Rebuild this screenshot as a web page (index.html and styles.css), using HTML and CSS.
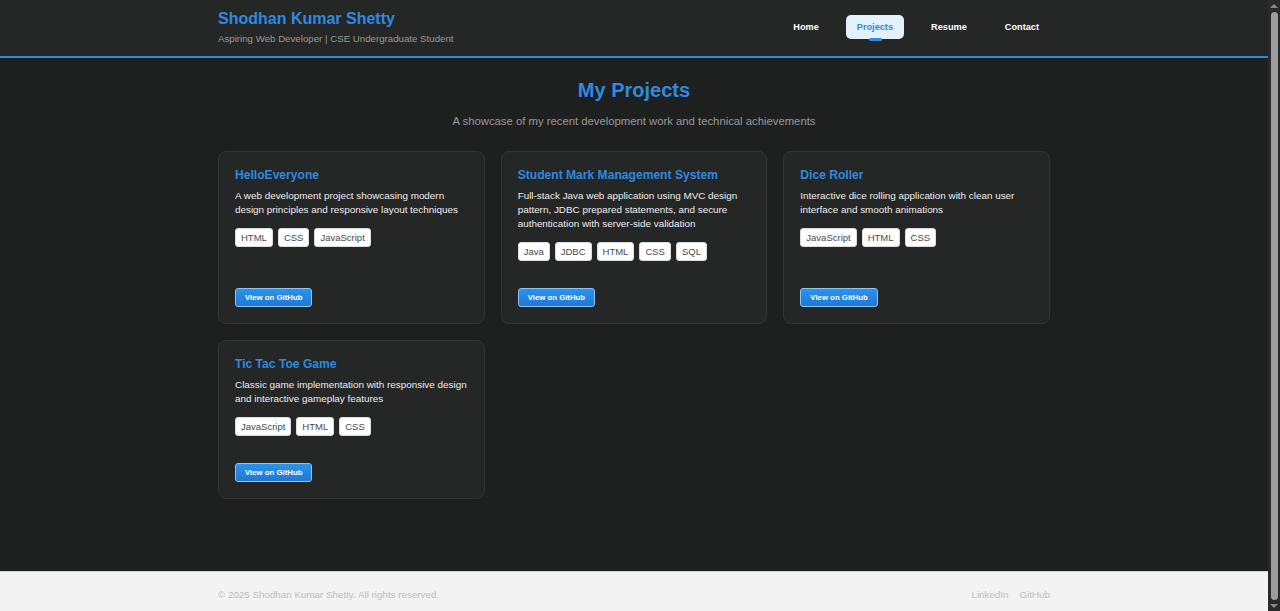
FILE: index.html
```html
<!DOCTYPE html>
<html lang="en">
<head>
<meta charset="utf-8">
<title>Shodhan Kumar Shetty - Projects</title>
<link rel="stylesheet" href="styles.css">
</head>
<body>
<header class="site-header">
  <div class="header-inner">
    <div class="brand">
      <h1 class="brand-name">Shodhan Kumar Shetty</h1>
      <p class="brand-tag">Aspiring Web Developer | CSE Undergraduate Student</p>
    </div>
    <nav class="nav">
      <a class="nav-link" href="#">Home</a>
      <a class="nav-link active" href="#">Projects</a>
      <a class="nav-link" href="#">Resume</a>
      <a class="nav-link" href="#">Contact</a>
    </nav>
  </div>
</header>
<main class="main">
  <h2 class="page-title">My Projects</h2>
  <p class="page-sub">A showcase of my recent development work and technical achievements</p>
  <div class="grid">
    <article class="card">
      <h3 class="card-title">HelloEveryone</h3>
      <p class="card-desc">A web development project showcasing modern design principles and responsive layout techniques</p>
      <div class="tags"><span class="tag">HTML</span><span class="tag">CSS</span><span class="tag">JavaScript</span></div>
      <a class="btn" href="#">View on GitHub</a>
    </article>
    <article class="card">
      <h3 class="card-title">Student Mark Management System</h3>
      <p class="card-desc">Full-stack Java web application using MVC design pattern, JDBC prepared statements, and secure authentication with server-side validation</p>
      <div class="tags"><span class="tag">Java</span><span class="tag">JDBC</span><span class="tag">HTML</span><span class="tag">CSS</span><span class="tag">SQL</span></div>
      <a class="btn" href="#">View on GitHub</a>
    </article>
    <article class="card">
      <h3 class="card-title">Dice Roller</h3>
      <p class="card-desc">Interactive dice rolling application with clean user interface and smooth animations</p>
      <div class="tags"><span class="tag">JavaScript</span><span class="tag">HTML</span><span class="tag">CSS</span></div>
      <a class="btn" href="#">View on GitHub</a>
    </article>
    <article class="card">
      <h3 class="card-title">Tic Tac Toe Game</h3>
      <p class="card-desc">Classic game implementation with responsive design and interactive gameplay features</p>
      <div class="tags"><span class="tag">JavaScript</span><span class="tag">HTML</span><span class="tag">CSS</span></div>
      <a class="btn" href="#">View on GitHub</a>
    </article>
  </div>
</main>
<footer class="site-footer">
  <div class="footer-inner">
    <p class="copy">© 2025 Shodhan Kumar Shetty. All rights reserved.</p>
    <div class="footer-links"><a href="#">LinkedIn</a><a href="#">GitHub</a></div>
  </div>
</footer>
<div class="scrollbar" aria-hidden="true">
  <span class="sb-arrow sb-up"></span>
  <span class="sb-thumb"></span>
  <span class="sb-arrow sb-down"></span>
</div>
</body>
</html>
```

FILE: styles.css
```css
* { box-sizing: border-box; }
html, body { margin: 0; padding: 0; }
html { background: #1e1f1f; }
body {
  background: #1e1f1f;
  font-family: "Liberation Sans", Arial, sans-serif;
  color: #e8e8e8;
  margin-right: 12px;
}
a { text-decoration: none; }

.scrollbar {
  position: fixed;
  top: 0;
  right: 0;
  width: 12px;
  height: 100vh;
  background: #2a2a2a;
  display: flex;
  flex-direction: column;
  align-items: center;
  padding: 4px 0 3px;
}
.sb-arrow {
  width: 0;
  height: 0;
  border-left: 4px solid transparent;
  border-right: 4px solid transparent;
}
.sb-up { border-bottom: 4px solid #8a8a8a; }
.sb-down { border-top: 4px solid #8a8a8a; }
.sb-thumb {
  flex: 1;
  width: 7px;
  margin: 4px 0;
  border-radius: 4px;
  background: #9d9d9d;
}

.site-header {
  background: #252626;
  border-bottom: 2px solid #2f8ae0;
}
.header-inner {
  width: 832px;
  margin: 0 auto;
  height: 56px;
  display: flex;
  align-items: center;
  justify-content: space-between;
}
.brand-name {
  margin: 0;
  font-size: 16px;
  font-weight: 700;
  color: #2f8ae0;
  line-height: 20px;
  margin-top: -3px;
}
.brand-tag {
  margin: 4px 0 0;
  font-size: 9.7px;
  color: #9a9a9a;
  line-height: 12px;
}
.nav {
  display: flex;
  gap: 16px;
  margin-top: -2px;
}
.nav-link {
  position: relative;
  display: block;
  padding: 0 11px;
  height: 24px;
  line-height: 24px;
  font-size: 9.2px;
  font-weight: 700;
  color: #ffffff;
  border-radius: 5px;
}
.nav-link.active {
  background: #e3f1fd;
  color: #2f8ae0;
}
.nav-link.active::after {
  content: "";
  position: absolute;
  left: 50%;
  bottom: -2px;
  width: 13px;
  height: 3px;
  margin-left: -6px;
  border-radius: 2px;
  background: #2f8ae0;
}

.main {
  width: 832px;
  margin: 0 auto;
  padding: 20px 0 72px;
}
.page-title {
  margin: 0;
  text-align: center;
  font-size: 20px;
  line-height: 24px;
  font-weight: 700;
  color: #2f8ae0;
}
.page-sub {
  margin: 12px 0 0;
  text-align: center;
  font-size: 11.3px;
  line-height: 14px;
  color: #9a9a9a;
}
.grid {
  margin-top: 23px;
  display: grid;
  grid-template-columns: repeat(3, 1fr);
  gap: 16px;
}
.card {
  background: #252626;
  border: 1px solid #333535;
  border-radius: 8px;
  padding: 16px;
  display: flex;
  flex-direction: column;
  align-items: flex-start;
}
.card-title {
  margin: -1px 0 0;
  font-size: 12.1px;
  line-height: 16px;
  font-weight: 700;
  color: #2f8ae0;
}
.card-desc {
  margin: 6px 0 0;
  font-size: 9.9px;
  line-height: 14px;
  color: #eeeeee;
}
.tags {
  display: flex;
  flex-wrap: wrap;
  gap: 5px;
  margin-top: 11px;
  margin-bottom: 27px;
}
.tag {
  display: block;
  background: #ffffff;
  color: #4a4a4a;
  border: 1px solid #dcdcdc;
  border-radius: 3px;
  height: 19px;
  line-height: 17px;
  padding: 0 5px;
  font-size: 9.5px;
}
.btn {
  margin-top: auto;
  display: block;
  height: 19px;
  line-height: 17px;
  padding: 0 9px;
  font-size: 7.8px;
  font-weight: 700;
  color: #ffffff;
  background: linear-gradient(#2b93ea, #1f78d3);
  border: 1px solid #8cc3f2;
  border-radius: 3px;
}

.site-footer {
  background: #f3f3f3;
  border-top: 1px solid #cfcfcf;
}
.footer-inner {
  width: 832px;
  margin: 0 auto;
  height: 48px;
  display: flex;
  align-items: center;
  justify-content: space-between;
  padding-bottom: 4px;
}
.copy {
  margin: 0;
  font-size: 9.8px;
  color: #bdbdbd;
}
.footer-links {
  display: flex;
  gap: 11px;
}
.footer-links a {
  font-size: 9.8px;
  color: #bdbdbd;
}
```
